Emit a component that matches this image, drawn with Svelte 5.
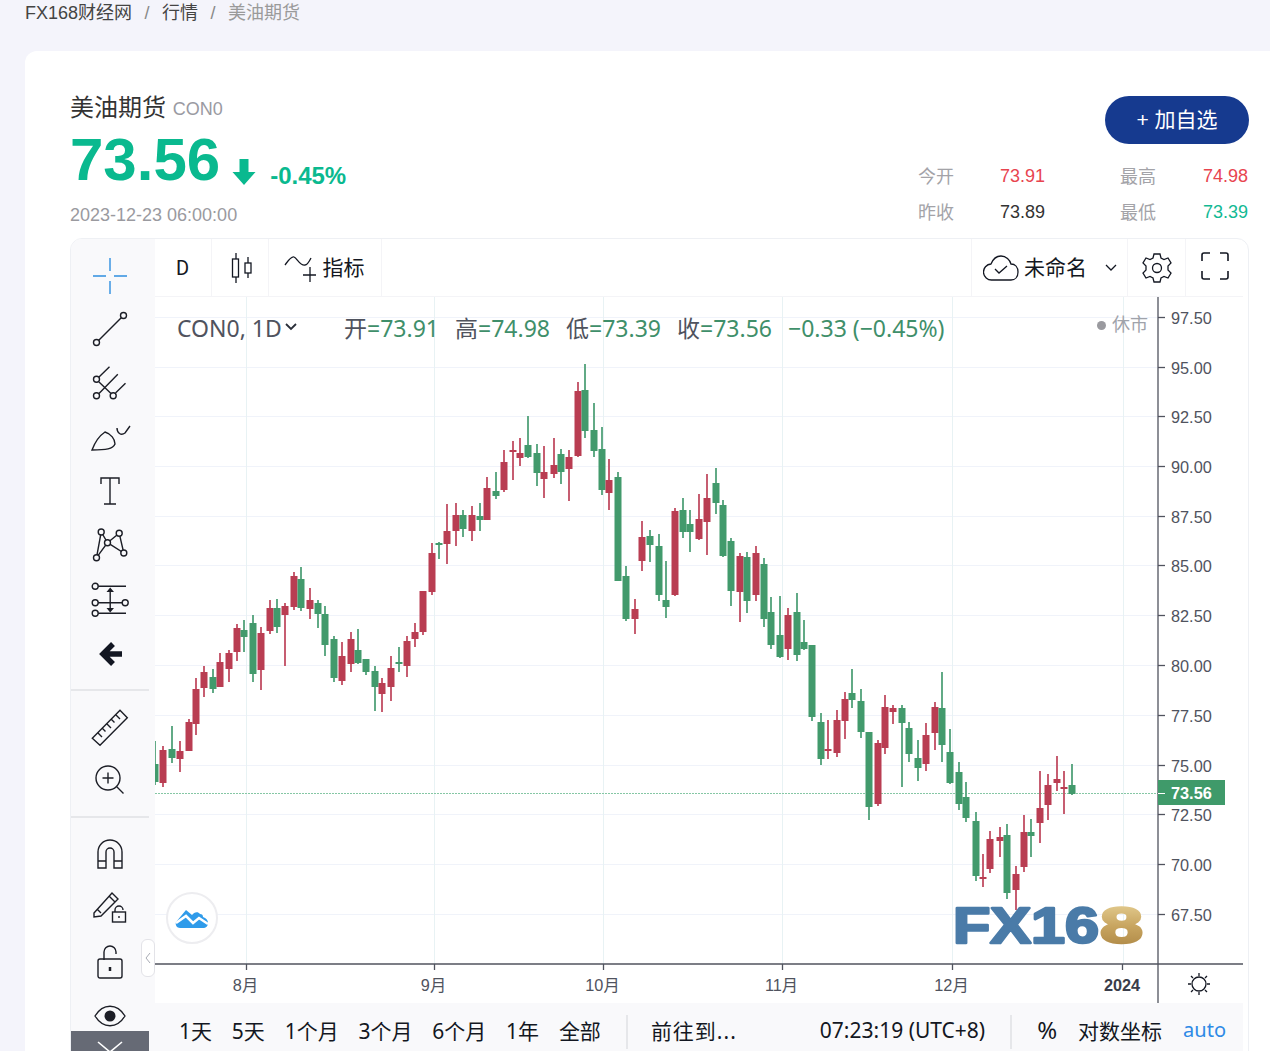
<script>
  const G = "g";
  const R = "r";

  // x, body top, body bottom, wick top, wick bottom, colour
  const candles = [
    [155, 764, 782, 741, 785, G], [163, 750, 783, 746, 787, R], [172, 749, 758, 726, 763, G],
    [180, 751, 759, 741, 772, R], [189, 722, 751, 719, 751, R], [196, 689, 724, 678, 735, R],
    [204, 672, 688, 666, 697, R], [213, 677, 689, 669, 693, G], [220, 662, 687, 653, 687, R],
    [229, 653, 669, 650, 682, R], [237, 628, 652, 624, 661, R], [244, 630, 637, 620, 652, G],
    [253, 623, 674, 615, 682, G], [261, 633, 670, 627, 690, R], [270, 608, 631, 600, 634, R],
    [277, 608, 627, 599, 633, G], [285, 606, 615, 603, 666, R], [294, 576, 607, 572, 610, R],
    [301, 579, 608, 567, 611, G], [310, 600, 609, 588, 619, R], [318, 603, 614, 600, 628, G],
    [325, 614, 645, 606, 656, G], [334, 639, 678, 636, 682, G], [342, 656, 681, 642, 685, R],
    [351, 639, 664, 632, 672, R], [358, 650, 663, 629, 664, G], [366, 659, 672, 659, 675, G],
    [375, 671, 687, 666, 711, G], [382, 683, 694, 678, 712, R], [391, 668, 687, 656, 701, R],
    [399, 662, 663, 647, 672, G], [407, 641, 666, 636, 677, R], [415, 632, 639, 623, 647, R],
    [423, 591, 632, 591, 635, R], [432, 553, 592, 543, 595, R], [439, 543, 545, 542, 559, G],
    [447, 531, 544, 504, 564, R], [456, 515, 531, 503, 546, R], [463, 515, 529, 510, 537, G],
    [472, 515, 531, 506, 541, R], [480, 516, 520, 503, 531, G], [487, 488, 520, 477, 520, R],
    [496, 491, 496, 472, 499, G], [504, 462, 490, 450, 492, R], [513, 450, 452, 441, 480, R],
    [520, 453, 458, 438, 466, R], [528, 445, 457, 416, 458, G], [537, 453, 473, 444, 486, G],
    [544, 472, 479, 446, 498, R], [554, 465, 474, 438, 478, R], [561, 454, 472, 449, 484, G],
    [569, 457, 469, 450, 501, R], [578, 391, 456, 382, 457, R], [585, 390, 431, 364, 438, G],
    [594, 430, 451, 403, 457, G], [602, 449, 490, 427, 495, G], [609, 480, 493, 459, 510, R],
    [618, 477, 581, 472, 581, G], [626, 576, 619, 566, 621, G], [635, 609, 619, 599, 634, R],
    [642, 537, 561, 521, 571, R], [650, 536, 545, 530, 562, G], [659, 546, 595, 534, 601, G],
    [666, 600, 607, 561, 618, G], [675, 511, 595, 508, 596, R], [683, 510, 532, 498, 538, G],
    [690, 524, 532, 510, 552, G], [699, 519, 539, 494, 540, R], [707, 498, 522, 474, 555, R],
    [716, 483, 503, 468, 514, G], [723, 505, 556, 500, 557, G], [731, 541, 591, 538, 606, G],
    [740, 556, 592, 553, 622, R], [747, 557, 601, 552, 613, G], [756, 553, 595, 546, 601, R],
    [764, 564, 619, 558, 627, G], [771, 612, 645, 597, 649, G], [780, 635, 657, 596, 658, G],
    [788, 615, 649, 608, 660, R], [797, 612, 655, 593, 661, G], [804, 642, 649, 620, 650, G],
    [812, 645, 717, 645, 721, G], [821, 722, 759, 713, 765, G], [828, 749, 751, 720, 759, R],
    [837, 720, 753, 710, 757, R], [845, 699, 721, 692, 739, R], [852, 693, 700, 669, 708, G],
    [861, 701, 732, 689, 738, G], [869, 732, 807, 732, 820, G], [878, 743, 804, 740, 806, R],
    [885, 707, 748, 695, 754, R], [893, 708, 712, 705, 724, R], [902, 708, 723, 705, 787, G],
    [909, 728, 754, 722, 762, G], [918, 758, 768, 740, 781, G], [926, 735, 764, 723, 771, R],
    [935, 707, 733, 702, 750, R], [942, 708, 745, 672, 762, G], [950, 752, 783, 729, 784, G],
    [959, 772, 804, 762, 810, G], [966, 797, 818, 782, 822, G], [976, 821, 876, 812, 881, G],
    [983, 877, 879, 854, 887, R], [990, 839, 869, 831, 873, R], [1000, 837, 841, 827, 857, R],
    [1007, 835, 893, 824, 899, G], [1016, 874, 890, 866, 910, R], [1024, 832, 867, 815, 872, R],
    [1031, 832, 836, 819, 857, G], [1040, 808, 823, 771, 843, R], [1048, 785, 805, 774, 820, R],
    [1057, 779, 783, 756, 791, R], [1064, 787, 789, 771, 814, R], [1072, 785, 794, 764, 795, G],
  ];

  const prices = [
    ["97.50", 317], ["95.00", 367], ["92.50", 416], ["90.00", 466], ["87.50", 516],
    ["85.00", 565], ["82.50", 615], ["80.00", 665], ["77.50", 715], ["75.00", 765],
    ["72.50", 814], ["70.00", 864], ["67.50", 914],
  ];

  const months = [["8月", 246], ["9月", 434], ["10月", 603], ["11月", 782], ["12月", 952]];

  const ohlc = [
    ["开", "73.91"], ["高", "74.98"], ["低", "73.39"], ["收", "73.56"],
  ];

  const ranges = ["1天", "5天", "1个月", "3个月", "6个月", "1年", "全部"];
</script>

<div class="page">
  <nav class="crumbs">
    <span>FX168财经网</span><i>/</i><span>行情</span><i>/</i><span class="current">美油期货</span>
  </nav>

  <main class="card">
    <header class="head">
      <div class="quote">
        <div class="title">美油期货 <small>CON0</small></div>
        <div class="price">
          <b>73.56</b>
          <svg width="24" height="28" viewBox="0 0 24 28"><path d="M7.500 1h9v13h7L12 27 .5 14h7z" fill="#0ab98f" /></svg>
          <em>-0.45%</em>
        </div>
        <div class="time">2023-12-23 06:00:00</div>
      </div>
      <div class="side">
        <button class="add">+ 加自选</button>
        <div class="stats">
          <span class="lab">今开</span><span class="up">73.91</span>
          <span class="lab">最高</span><span class="up r">74.98</span>
          <span class="lab">昨收</span><span class="flat">73.89</span>
          <span class="lab">最低</span><span class="down r">73.39</span>
        </div>
      </div>
    </header>

    <section class="terminal">
      <aside class="tools">
        <div class="tool t0">
          <svg width="36" height="36" viewBox="0 0 36 36"><path d="M18 0v13M18 23v13M1 18h13M22 18h13" /></svg>
        </div>
        <div class="tool t1">
          <svg width="36" height="36" viewBox="0 0 36 36"><path d="M6 30L30 6" /><circle cx="4.500" cy="31.500" r="3" /><circle cx="31.500" cy="4.500" r="3" /></svg>
        </div>
        <div class="tool t2">
          <svg width="36" height="36" viewBox="0 0 36 36"><path d="M7 11L17.500.7M7 27.500L25.800 8.300M23.500 27l10-9.700M7 16l12 11.500" /><circle cx="4.500" cy="13.300" r="3" /><circle cx="4.500" cy="29.700" r="3" /><circle cx="21.200" cy="29.700" r="3" /></svg>
        </div>
        <div class="tool t3">
          <svg width="40" height="36" viewBox="0 0 40 36"><path d="M2 30C5 22 9 16 15 12c6 2 10 7 10 12-2 5-9 6-23 6zM27 8c0 5 4 8 8 5l5-7" /></svg>
        </div>
        <div class="tool t4">
          <svg width="24" height="32" viewBox="0 0 24 32"><path d="M3 9V3h18v6M12 3v26M6 29h12" /></svg>
        </div>
        <div class="tool t5">
          <svg width="36" height="36" viewBox="0 0 36 36"><path d="M4.500 31.700L9.200 6l6.300 10.700-11 15M15.500 16.700l11.700-9.400 4.600 19.700-16.300-10.300" /><circle cx="9.200" cy="6" r="3" /><circle cx="27.200" cy="7.300" r="3" /><circle cx="15.500" cy="16.700" r="3" /><circle cx="31.800" cy="27" r="3" /><circle cx="4.500" cy="31.700" r="3" /></svg>
        </div>
        <div class="tool t6">
          <svg width="38" height="34" viewBox="0 0 38 34"><path d="M7 3.300h28M7 30.300h28M7 19.700h24M19.200 8v18" /><circle cx="4.200" cy="3.300" r="3" /><circle cx="4.200" cy="19.700" r="3" /><circle cx="4.200" cy="30.300" r="3" /><circle cx="34.200" cy="19.700" r="3" /><path class="solid" d="M15.500 9l3.700-4.500L23 9zM15.500 25l3.700 4.500L23 25z" /></svg>
        </div>
        <div class="tool t7">
          <svg width="26" height="26" viewBox="0 0 26 26"><path class="thick" d="M14 3L4 13l10 10M5 13h18" /></svg>
        </div>
        <hr class="h1" />
        <div class="tool t8">
          <svg width="38" height="38" viewBox="0 0 38 38"><path d="M1.300 29.300L29 1.300l7.300 7.400L9 36.300zM7 24l4 4M11.500 19.500l3 3M16 15l4 4M20.500 10.500l3 3M25 6l4 4" /></svg>
        </div>
        <div class="tool t9">
          <svg width="30" height="30" viewBox="0 0 30 30"><circle cx="13" cy="13" r="12" /><path d="M21.500 21.500l7 7M7.500 13h11M13 7.500v11" /></svg>
        </div>
        <hr class="h2" />
        <div class="tool t10">
          <svg width="26" height="30" viewBox="0 0 26 30"><path d="M1 29V13a12 12 0 0 1 24 0v16h-8V13a4 4 0 0 0-8 0v16zM1 22h8M17 22h8" /></svg>
        </div>
        <div class="tool t11">
          <svg width="34" height="34" viewBox="0 0 34 34"><path d="M1 23L19 3l6 6-17 17-7 1zM16 6l6 6M4 19l4 4" /><rect x="19.500" y="22" width="13" height="10" /><path d="M22 22v-2a4 4 0 0 1 8 0M26 26v2" /></svg>
        </div>
        <div class="tool t12">
          <svg width="26" height="34" viewBox="0 0 26 34"><path d="M7 15V7a6 6 0 0 1 12 0v2" /><rect x="1" y="14" width="24" height="19" rx="2" /><path d="M13 22v4" stroke-width="2.500" /></svg>
        </div>
        <div class="tool t13">
          <svg width="32" height="22" viewBox="0 0 32 22"><path d="M1 11c8-13 22-13 30 0-8 13-22 13-30 0z" /><circle class="solid" cx="16" cy="11" r="5.500" /></svg>
        </div>
        <div class="more">
          <svg width="26" height="12" viewBox="0 0 26 12"><path d="M1 1l12 10L25 1" /></svg>
        </div>
      </aside>

      <div class="main">
        <div class="topbar">
          <div class="cell c-d">D</div>
          <div class="cell c-bars">
            <svg width="22" height="30" viewBox="0 0 22 30">
              <path d="M5 0v6M5 24v6M17 4v6M17 20v5" /><rect x="1.500" y="6" width="6" height="18" /><rect x="14" y="10" width="6" height="10" />
            </svg>
          </div>
          <div class="cell c-ind">
            <svg width="32" height="30" viewBox="0 0 32 30">
              <path d="M1 12C4 8 7 3 10 4c3 1 6 9 11 8 2 0 5-5 6-7M26 14v15M19 22h13" />
            </svg>
            <span>指标</span>
          </div>
          <div class="spring"></div>
          <div class="cell c-save">
            <svg width="36" height="26" viewBox="0 0 36 26">
              <path d="M9 25a8 8 0 0 1-1-16C10 4 14 1 18 1c5 0 9 4 10 8 4 0 7 3 7 8s-3 8-7 8zM12 14l4 4 8-7" />
            </svg>
            <span>未命名</span>
            <svg class="chev" width="12" height="8" viewBox="0 0 12 8"><path d="M1 1l5 5 5-5" /></svg>
          </div>
          <div class="cell c-gear">
            <svg width="32" height="32" viewBox="0 0 32 32">
              <path d="M13 2h6l1 4 3 1.500 4-1.500 3 5-3 3v4l3 3-3 5-4-1.500-3 1.500-1 4h-6l-1-4-3-1.500-4 1.500-3-5 3-3v-4L2 11l3-5 4 1.500L12 6z" /><circle cx="16" cy="16" r="4.500" />
            </svg>
          </div>
          <div class="cell c-full">
            <svg width="28" height="28" viewBox="0 0 28 28"><path d="M1 9V3a2 2 0 0 1 2-2h6M19 1h6a2 2 0 0 1 2 2v6M27 19v6a2 2 0 0 1-2 2h-6M9 27H3a2 2 0 0 1-2-2v-6" /></svg>
          </div>
        </div>

        <div class="plot">
          <svg class="chart" width="1088" height="706" viewBox="155 297 1088 706">
            <defs>
              <linearGradient id="gold" x1="0" y1="0" x2="0" y2="1">
                <stop offset="0" stop-color="#e9d49a" />
                <stop offset="0.5" stop-color="#c8a560" />
                <stop offset="1" stop-color="#a8813f" />
              </linearGradient>
            </defs>

            {#each prices as [, y]}
              <line x1="155" x2="1158" y1={y + 0.5} y2={y + 0.5} class="grid" />
            {/each}
            {#each months as [, x]}
              <line x1={x + 0.5} x2={x + 0.5} y1="297" y2="964" class="vgrid" />
            {/each}
            <line x1="1123.500" x2="1123.500" y1="297" y2="964" class="vgrid" />

            <line x1="155" x2="1158" y1="793.500" y2="793.500" class="last" />

            <g class="series">
              {#each candles as [x, top, bottom, hi, lo, c]}
                <line x1={x} x2={x} y1={hi} y2={lo} class={"wick " + c} />
                <rect x={x - 3.5} y={top} width="7" height={Math.max(bottom - top, 2)} class={"body " + c} />
              {/each}
            </g>

            <g class="mark">
              <text x="953" y="943" class="mark-blue" textLength="146" lengthAdjust="spacingAndGlyphs">FX16</text>
              <text x="1100" y="943" class="mark-gold" textLength="43" lengthAdjust="spacingAndGlyphs">8</text>
            </g>

            <line x1="155" x2="1243" y1="964" y2="964" class="axis" />
            <line x1="1158" x2="1158" y1="297" y2="1003" class="axis" />

            {#each prices as [label, y]}
              <line x1="1158" x2="1165" y1={y + 0.5} y2={y + 0.5} class="axis" />
              <text x="1171" y={y + 6.6} class="tick">{label}</text>
            {/each}

            <rect x="1158" y="780" width="67" height="25" fill="#3f9a6a" />
            <line x1="1158" x2="1165" y1="793.500" y2="793.500" stroke="#fff" />
            <text x="1171" y="799" class="tick now">73.56</text>

            {#each months as [label, x]}
              <line x1={x + 0.5} x2={x + 0.5} y1="964" y2="970" class="axis" />
              <text x={x - 0.5} y="991" class="tick mid">{label}</text>
            {/each}
            <line x1="1122.500" x2="1122.500" y1="964" y2="970" class="axis" />
            <text x="1122" y="991" class="tick mid year">2024</text>

            <g class="sun" transform="translate(1199 984)">
              <circle r="7" />
              <path d="M0-11v3M0 8v3M-11 0h3M8 0h3M-8-8l2 2M6 6l2 2M-8 8l2-2M6-6l2-2" />
            </g>
          </svg>

          <div class="legend">
            <span class="sym">CON0, 1D</span>
            <svg class="sym-chev" width="12" height="8" viewBox="0 0 12 8"><path d="M1 1l5 5 5-5" /></svg>
            <div class="ohlc">
              {#each ohlc as [k, v]}
                <span class="pair">{k}<em>={v}</em></span>
              {/each}
              <em class="chg">−0.33 (−0.45%)</em>
            </div>
          </div>

          <div class="closed"><i></i>休市</div>

          <div class="tv-logo">
            <svg width="34" height="20" viewBox="0 0 34 20">
              <path d="M1 14L11 2l6 5c2-3 6-4 8-1 2 0 3 1 3 3 3 1 5 3 5 6 0 3-2 5-5 5H5c-3 0-5-3-4-6z" fill="#2f9bea" />
              <path d="M1 15l10-7 7 7 6-5 9 6" fill="none" stroke="#fff" stroke-width="2.500" />
            </svg>
          </div>
          <div class="collapse">
            <svg width="6" height="12" viewBox="0 0 6 12"><path d="M5 1L1 6l4 5" /></svg>
          </div>
        </div>

        <div class="bottombar">
          <div class="ranges">
            {#each ranges as r}
              <span>{r}</span>
            {/each}
          </div>
          <i class="sep"></i>
          <span class="goto">前往到...</span>
          <span class="clock">07:23:19 (UTC+8)</span>
          <i class="sep"></i>
          <span class="pct">%</span>
          <span class="logs">对数坐标</span>
          <span class="auto">auto</span>
        </div>
      </div>
    </section>
  </main>
</div>

<style>
  :global(body) {
    margin: 0;
    background: #f4f4fb;
    overflow: hidden;
  }

  .page {
    height: 1051px;
    overflow: hidden;
    font-family: "Liberation Sans", "Noto Sans CJK SC", sans-serif;
    color: #303030;
  }

  .crumbs {
    height: 51px;
    box-sizing: border-box;
    padding: 1px 0 0 25px;
    font-size: 18px;
    line-height: 24px;
    white-space: nowrap;
    color: #444;
  }

  .crumbs i {
    font-style: normal;
    color: #888;
    margin: 0 12.500px;
  }

  .crumbs .current {
    color: #9a9a9a;
  }

  .card {
    margin-left: 25px;
    padding: 40px 21px 0 45px;
    height: 1000px;
    box-sizing: border-box;
    background: #fff;
    border-radius: 12px 0 0 0;
  }

  .head {
    display: flex;
    justify-content: space-between;
    height: 147px;
  }

  .title {
    font-size: 24px;
    line-height: 34px;
    color: #333;
  }

  .title small {
    font-size: 18px;
    color: #9a9aa2;
    vertical-align: 1px;
  }

  .price {
    display: flex;
    align-items: center;
    height: 60px;
    margin-top: -1px;
    color: #0ab98f;
  }

  .price b {
    font-size: 60px;
    line-height: 60px;
    margin-top: 10px;
  }

  .price svg {
    margin: 34px 0 0 12px;
  }

  .price em {
    font-style: normal;
    font-weight: bold;
    font-size: 24px;
    margin: 42px 0 0 14px;
  }

  .time {
    margin-top: 18px;
    font-size: 18px;
    line-height: 24px;
    color: #9a9a9f;
  }

  .side {
    width: 331px;
    display: flex;
    flex-direction: column;
    align-items: flex-end;
    padding-top: 5px;
  }

  .add {
    width: 144px;
    height: 48px;
    padding: 0 0 5px;
    border: 0;
    border-radius: 24px;
    background: #163a8f;
    color: #fff;
    font-family: inherit;
    font-size: 21px;
  }

  .stats {
    width: 331px;
    margin-top: 14px;
    display: grid;
    grid-template-columns: 82px 120px 82px 47px;
    grid-auto-rows: 36px;
    align-items: center;
    font-size: 18px;
  }

  .lab {
    color: #a3a3a8;
    margin-bottom: 2px;
  }

  .up {
    color: #e8444f;
  }

  .down {
    color: #12b993;
  }

  .flat {
    color: #333;
  }

  .r {
    text-align: right;
    margin-right: 1px;
  }

  .terminal {
    display: flex;
    height: 813px;
    border: 1px solid #eef0f4;
    border-radius: 12px 12px 0 0;
    overflow: hidden;
  }

  .tools {
    position: relative;
    width: 84px;
    flex: none;
    box-sizing: border-box;
    padding-top: 10px;
    background: #f9f9fb;
    overflow: hidden;
  }

  .tool {
    display: flex;
    align-items: center;
    justify-content: center;
    padding-right: 6px;
  }

  .tool svg {
    flex: none;
    fill: none;
    stroke: #1c1e26;
    stroke-width: 1.400;
    overflow: visible;
  }

  .tool circle {
    fill: #f9f9fb;
  }

  .tool .solid {
    fill: #1c1e26;
    stroke: none;
  }

  .tool .thick {
    stroke: #131722;
    stroke-width: 5.500;
    stroke-linejoin: miter;
  }

  .t0 {
    height: 54px;
  }

  .t0 svg {
    stroke: #2f8fe0;
  }

  .t1 {
    height: 52px;
  }

  .t2 {
    height: 58px;
  }

  .t3 {
    height: 50px;
  }

  .t4 {
    height: 56px;
  }

  .t5 {
    height: 50px;
  }

  .t6 {
    height: 62px;
  }

  .t7 {
    height: 46px;
  }

  .t7 svg {
    margin-left: 4px;
  }

  .tools hr {
    height: 2px;
    margin: 0 6px 0 0;
    border: 0;
    background: #e6e7ea;
  }

  .h1 {
    margin-top: 12px !important;
  }

  .h2 {
    margin-top: 21px !important;
  }

  .t8 {
    height: 74px;
  }

  .t9 {
    height: 30px;
  }

  .t10 {
    height: 72px;
  }

  .t11 {
    height: 34px;
  }

  .t12 {
    height: 76px;
  }

  .t13 {
    height: 32px;
  }

  .more {
    position: absolute;
    left: 0;
    bottom: 0;
    width: 78px;
    height: 21px;
    background: #666a75;
    text-align: center;
    line-height: 34px;
  }

  .more svg {
    fill: none;
    stroke: #fff;
    stroke-width: 1.600;
  }

  .main {
    flex: 1;
    min-width: 0;
    display: flex;
    flex-direction: column;
    padding-right: 5px;
  }

  .topbar {
    height: 58px;
    flex: none;
    display: flex;
    border-bottom: 1px solid #f4f4f7;
    box-sizing: border-box;
    font-size: 20px;
    color: #131722;
  }

  .topbar svg {
    flex: none;
    fill: none;
    stroke: #131722;
    stroke-width: 1.300;
  }

  .cell {
    display: flex;
    align-items: center;
    justify-content: center;
    box-sizing: border-box;
    border-right: 1px solid #f4f4f7;
  }

  .spring {
    flex: 1;
    border-right: 1px solid #f4f4f7;
  }

  .c-d {
    width: 57px;
    padding-right: 1px;
    font-family: Roboto, sans-serif;
  }

  .c-bars {
    width: 57px;
    padding-top: 1px;
    padding-left: 3px;
  }

  .c-ind {
    width: 113px;
    gap: 7px;
    padding-right: 2px;
  }

  .c-ind span,
  .c-save span {
    font-size: 21px;
    margin-bottom: 4px;
  }

  .c-save {
    width: 156px;
    gap: 5px;
    justify-content: flex-start;
    padding-left: 11px;
  }

  .topbar .chev {
    margin-left: 13px;
  }

  .c-gear {
    width: 58px;
  }

  .c-full {
    width: 57px;
    padding-bottom: 4px;
    border-right: 0;
  }

  .topbar .c-full svg {
    stroke-width: 1.600;
  }

  .plot {
    position: relative;
    flex: none;
    height: 706px;
    background: #fff;
  }

  .chart {
    display: block;
    font-family: "Liberation Sans", "Noto Sans CJK SC", sans-serif;
  }

  .grid {
    stroke: #f0f3fa;
  }

  .vgrid {
    stroke: #e8f2f4;
  }

  .series {
    filter: blur(0.35px);
  }

  .wick {
    stroke-width: 1.900;
  }

  .wick.g {
    stroke: #5aa680;
  }

  .wick.r {
    stroke: #c4566a;
  }

  .body.g {
    fill: #429a6c;
  }

  .body.r {
    fill: #b93d52;
  }

  .last {
    stroke: #86c7a5;
    stroke-dasharray: 2 1;
  }

  .axis {
    stroke: #50535e;
    stroke-width: 1.300;
  }

  .tick {
    font-size: 16.300px;
    fill: #50535e;
  }

  .now {
    fill: #fff;
    font-weight: bold;
  }

  .mid {
    text-anchor: middle;
  }

  .year {
    font-weight: bold;
    fill: #3a3d4a;
  }

  .sun {
    fill: none;
    stroke: #131722;
    stroke-width: 1.300;
  }

  .mark {
    filter: blur(0.6px);
  }

  .mark text {
    font-size: 50px;
    font-weight: bold;
    stroke-width: 2.500;
    stroke-linejoin: round;
  }

  .mark-blue {
    fill: #4a7ba8;
    stroke: #4a7ba8;
  }

  .mark-gold {
    fill: url(#gold);
    stroke: url(#gold);
  }

  .legend {
    position: absolute;
    left: 22px;
    top: 16px;
    display: flex;
    align-items: center;
    height: 30px;
    font-family: "Noto Sans", "Noto Sans CJK SC", sans-serif;
    font-size: 23px;
    line-height: 30px;
    color: #50535e;
    white-space: nowrap;
  }

  .sym {
    width: 102px;
  }

  .sym-chev {
    margin: 0 0 3px 6px;
    fill: none;
    stroke: #2a2e39;
    stroke-width: 1.800;
  }

  .ohlc {
    display: flex;
    align-items: baseline;
    margin-left: 47px;
  }

  .pair {
    width: 111px;
  }

  .legend em {
    font-style: normal;
    color: #3f8f6a;
  }

  .closed {
    position: absolute;
    left: 942px;
    top: 16px;
    display: flex;
    align-items: center;
    font-size: 18px;
    line-height: 24px;
    color: #a0a3aa;
  }

  .closed i {
    width: 9px;
    height: 9px;
    margin-right: 6px;
    border-radius: 50%;
    background: #9a9a9f;
  }

  .tv-logo {
    position: absolute;
    left: 11px;
    top: 595px;
    width: 48px;
    height: 48px;
    display: flex;
    align-items: center;
    justify-content: center;
    border: 2px solid #ededf0;
    border-radius: 50%;
    background: #fff;
  }

  .collapse {
    position: absolute;
    left: -14px;
    top: 642px;
    width: 12px;
    height: 36px;
    display: flex;
    align-items: center;
    justify-content: center;
    border: 1px solid #e3e3e8;
    border-radius: 6px;
    background: #fff;
  }

  .collapse svg {
    fill: none;
    stroke: #a8abb4;
  }

  .bottombar {
    flex: none;
    height: 48px;
    box-sizing: border-box;
    padding: 5px 17px 0 0;
    display: flex;
    align-items: center;
    background: #f9f9fb;
    font-family: "Noto Sans", "Noto Sans CJK SC", sans-serif;
    font-size: 21px;
    color: #131722;
    white-space: nowrap;
  }

  .ranges {
    display: flex;
    gap: 19.800px;
    padding-left: 24px;
  }

  .sep {
    flex: none;
    width: 2px;
    height: 34px;
    margin: 4px 0 0 25px;
    background: #e6e7ea;
  }

  .goto {
    margin-left: 23px;
    letter-spacing: 1px;
  }

  .clock {
    margin-left: auto;
  }

  .pct {
    margin-left: 25px;
    font-size: 24px;
  }

  .logs {
    margin-left: 21px;
  }

  .auto {
    margin-left: 21px;
    font-size: 20px;
    color: #2e8ae6;
  }
</style>
